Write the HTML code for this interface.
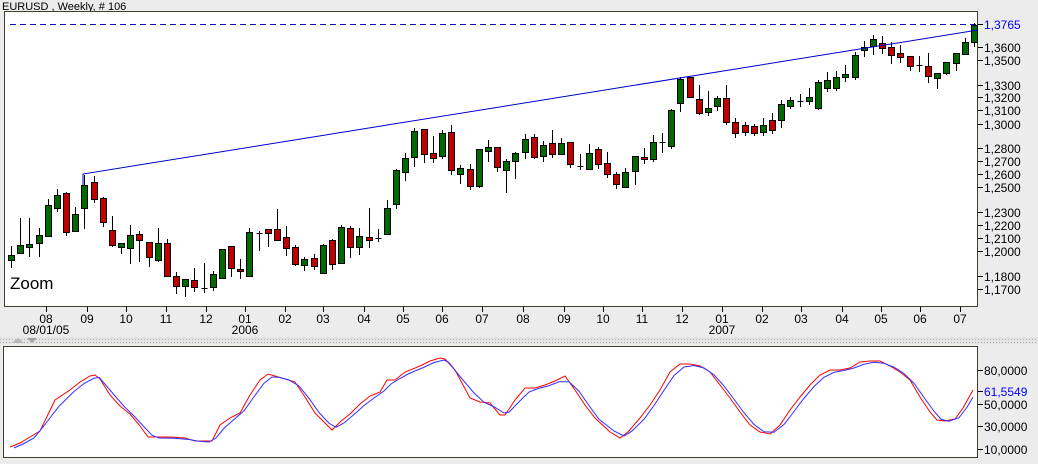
<!DOCTYPE html>
<html><head><meta charset="utf-8">
<style>
html,body{margin:0;padding:0;background:#ececec;width:1038px;height:464px;overflow:hidden;font-family:"Liberation Sans",sans-serif;}
svg{position:absolute;left:0;top:0;}
</style></head>
<body>
<svg id="s" width="1038" height="464" xmlns="http://www.w3.org/2000/svg" font-family="Liberation Sans, sans-serif">
<defs>
<pattern id="dots" width="3" height="3" patternUnits="userSpaceOnUse"><rect width="3" height="3" fill="#e4e4e4"/><rect width="1" height="1" fill="#b0b0b0"/></pattern>
</defs>
<text x="2" y="10" font-size="11" fill="#000">EURUSD , Weekly, # 106</text>
<rect x="4.5" y="11.5" width="973" height="295" fill="#fff" stroke="#404030" stroke-width="1"/>
<line x1="10" y1="24.5" x2="978" y2="24.5" stroke="#1010c0" stroke-dasharray="6,4"/>
<g id="candles"></g>
<polyline points="83,185 83,174 978,30" fill="none" stroke="#0000cc" stroke-width="1"/>
<text x="10" y="289" font-size="17" fill="#000">Zoom</text>
<g font-size="12" fill="#000" id="raxis"></g>
<g font-size="12" fill="#000" text-anchor="middle" id="baxis"></g>
<rect x="0" y="337" width="1038" height="7" fill="url(#dots)"/>
<polygon points="12,343 18,338 24,343" fill="#b8b8b8"/>
<polygon points="27,338 37,338 32,343" fill="#a0a0a0"/>
<rect x="3.5" y="346.5" width="974" height="111" fill="#fff" stroke="#404030"/>
<polyline id="red" fill="none" stroke="#ff0000" stroke-width="1"/>
<polyline id="blue" fill="none" stroke="#3030ff" stroke-width="1"/>
<g font-size="12">
<line x1="978" y1="370.5" x2="983" y2="370.5" stroke="#000"/><text x="984" y="375">80,0000</text>
<line x1="978" y1="391.5" x2="983" y2="391.5" stroke="#000"/><text x="984" y="396" fill="#0000ff">61,5549</text>
<line x1="978" y1="404.5" x2="983" y2="404.5" stroke="#000"/><text x="984" y="409">50,0000</text>
<line x1="978" y1="426.5" x2="983" y2="426.5" stroke="#000"/><text x="984" y="431">30,0000</text>
<line x1="978" y1="449.5" x2="983" y2="449.5" stroke="#000"/><text x="984" y="454">10,0000</text>
</g>
</svg>
<script>
var NS="http://www.w3.org/2000/svg";
function el(t,a,p){var e=document.createElementNS(NS,t);for(var k in a)e.setAttribute(k,a[k]);(p||document.getElementById('s')).appendChild(e);return e;}
var C=[
[255,260,246,268,'g'],[245,253,218,254,'g'],[244,247,218,257,'g'],[235,243,228,257,'g'],[205,236,199,237,'g'],
[195,208,189,212,'g'],[193,232,192,236,'r'],[214,231,207,232,'g'],[185,208,175,229,'g'],[182,199,176,203,'r'],
[198,222,197,227,'r'],[230,245,216,247,'r'],[243,247,243,254,'g'],[235,248,225,264,'g'],[234,240,231,262,'r'],
[242,257,242,267,'r'],[243,260,228,262,'g'],[243,276,239,277,'r'],[276,286,272,294,'r'],[279,286,279,297,'g'],
[280,287,268,292,'r'],[288,288,263,293,'x'],[274,287,271,291,'g'],[249,278,249,278,'g'],[246,268,246,277,'r'],
[269,271,259,279,'r'],[232,276,228,277,'g'],[233,233,231,251,'x'],[229,233,229,247,'r'],[229,240,209,241,'r'],
[237,248,226,256,'r'],[247,264,245,266,'r'],[259,265,257,271,'g'],[258,266,254,270,'r'],[245,273,244,274,'g'],
[240,264,239,270,'r'],[227,263,225,263,'g'],[228,247,226,258,'r'],[236,247,228,255,'g'],[237,240,208,248,'r'],
[238,238,229,242,'x'],[208,234,200,234,'g'],[170,204,169,209,'g'],[158,172,153,181,'g'],[131,157,128,167,'g'],
[129,154,129,163,'r'],[153,158,136,163,'r'],[133,156,130,159,'g'],[132,170,125,175,'r'],[168,174,165,184,'g'],
[169,186,164,190,'r'],[149,186,149,188,'g'],[147,151,140,162,'g'],[147,167,147,172,'r'],[161,170,159,193,'g'],
[153,161,152,179,'g'],[139,152,134,159,'g'],[137,157,134,159,'r'],[145,156,141,162,'g'],[143,154,130,158,'r'],
[143,154,138,155,'g'],[142,164,142,168,'r'],[166,166,154,170,'x'],[153,169,144,169,'g'],[149,164,147,169,'r'],
[163,174,152,178,'r'],[174,184,172,189,'r'],[172,187,168,188,'g'],[156,171,156,185,'g'],[157,159,148,164,'r'],
[142,159,135,162,'g'],[142,142,133,153,'x'],[110,146,109,149,'g'],[79,103,77,112,'g'],[77,97,77,98,'r'],
[99,113,85,115,'r'],[108,112,91,116,'g'],[98,106,96,111,'g'],[98,122,85,125,'r'],[122,133,118,138,'r'],
[125,132,122,136,'r'],[126,133,124,136,'r'],[125,132,118,136,'g'],[120,130,113,134,'r'],[104,120,100,128,'g'],
[100,106,97,109,'g'],[101,101,94,107,'x'],[97,101,88,105,'g'],[82,108,80,110,'g'],[80,88,72,92,'g'],
[77,88,71,91,'g'],[74,77,65,82,'g'],[55,77,52,80,'g'],[47,50,41,57,'g'],[39,46,35,55,'g'],
[43,48,36,54,'r'],[47,55,42,64,'r'],[53,57,45,63,'r'],[56,66,56,71,'r'],[65,65,56,72,'x'],
[66,76,53,83,'r'],[73,78,73,89,'g'],[62,73,62,75,'g'],[53,63,53,71,'g'],[42,54,38,55,'g'],[25,42,23,47,'g']];
var g=document.getElementById('candles');
C.forEach(function(c,i){
 var x=Math.round(11+9.17*i)+0.5;
 el('line',{x1:x,y1:c[2],x2:x,y2:c[3],stroke:'#000','stroke-width':1},g);
 if(c[4]=='x'){el('line',{x1:x-3,y1:c[0]+.5,x2:x+3,y2:c[0]+.5,stroke:'#000','stroke-width':1},g);}
 else el('rect',{x:x-3,y:c[0]+.5,width:6,height:Math.max(c[1]-c[0],2),fill:c[4]=='g'?'#006a00':'#c00000',stroke:'#000','stroke-width':1},g);
});
var ra=[["1,3765",24,1],["1,3600",47],["1,3500",60],["1,3300",85],["1,3200",97],["1,3100",110],["1,3000",124],["1,2800",148],["1,2700",161],["1,2600",174],["1,2500",187],["1,2300",212],["1,2200",225],["1,2100",238],["1,2000",251],["1,1800",276],["1,1700",289]];
var r=document.getElementById('raxis');
ra.forEach(function(a){el('line',{x1:978,y1:a[1]+.5,x2:983,y2:a[1]+.5,stroke:'#000'},r);var t=el('text',{x:984,y:a[1]+5,fill:a[2]?'#0000ff':'#000'},r);t.textContent=a[0];});
var ba=[["08",46],["09",87],["10",126],["11",166],["12",206],["01",245],["02",285],["03",323],["04",364],["05",403],["06",442],["07",482],["08",523],["09",564],["10",603],["11",642],["12",682],["01",722],["02",762],["03",801],["04",842],["05",881],["06",920],["07",960]];
var b=document.getElementById('baxis');
ba.forEach(function(a){el('line',{x1:a[1]+.5,y1:307,x2:a[1]+.5,y2:312,stroke:'#000'},b);var t=el('text',{x:a[1],y:323},b);t.textContent=a[0];});
[["08/01/05",46],["2006",245],["2007",722]].forEach(function(a){var t=el('text',{x:a[1],y:334},b);t.textContent=a[0];});
var R=[[10,447],[20,443],[30,437],[40,431],[55,400],[70,390],[80,382],[90,376],[95,375],[100,379],[110,395],[120,406],[130,414],[140,426],[148,437],[155,437],[170,437],[185,438],[195,441],[205,441],[212,441],[220,425],[230,418],[240,413],[250,395],[260,380],[268,374],[275,376],[285,379],[295,382],[305,397],[315,413],[325,423],[332,430],[340,422],[350,414],[360,404],[370,396],[380,392],[387,380],[395,380],[405,372],[420,366],[430,361],[440,358],[445,359],[455,370],[470,398],[480,402],[490,403],[500,415],[505,415],[515,400],[525,388],[535,388],[545,385],[555,381],[565,376],[575,390],[585,405],[595,418],[610,432],[620,438],[628,432],[640,418],[650,405],[660,390],[670,372],[680,364],[690,364],[700,366],[710,372],[720,385],[730,398],[740,412],[750,425],[760,432],[770,434],[780,425],[790,410],[800,397],[810,385],[820,375],[830,370],[840,370],[850,368],[860,362],[870,361],[880,361],[890,366],[900,372],[910,380],[920,397],[930,412],[937,420],[945,421],[955,419],[963,408],[973,390]];
document.getElementById('red').setAttribute('points',R.map(function(p){return p[0]+','+p[1];}).join(' '));
var B=R.map(function(p,i){var y=p[1];if(i>0&&i<R.length-1){y=(R[i-1][1]+2*p[1]+R[i+1][1])/4;}return [Math.min(p[0]+4,973),y+1];});
B[B.length-1]=[973,397];
document.getElementById('blue').setAttribute('points',B.map(function(p){return p[0]+','+p[1];}).join(' '));
</script>
</body></html>
